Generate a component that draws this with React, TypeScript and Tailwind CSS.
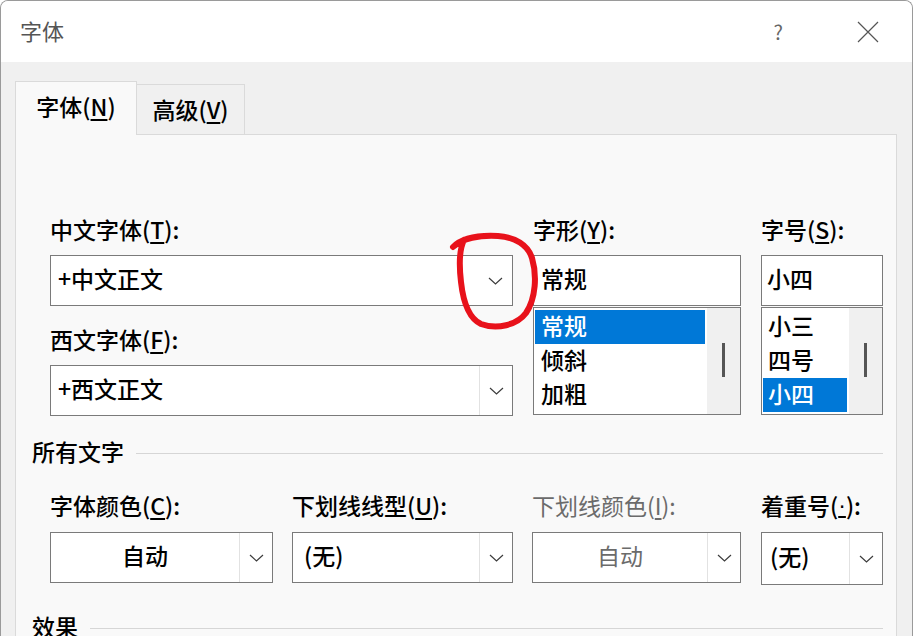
import React from "react"

const FONT = "font-['Noto_Sans_CJK_SC','Noto_Sans',sans-serif]"

function Chevron() {
  return (
    <svg width="15" height="8" viewBox="0 0 15 8">
      <polyline points="1,1 7.5,7 14,1" fill="none" stroke="#3c3c3c" strokeWidth="1.2" />
    </svg>
  )
}

function Combo({
  value,
  className = "",
  center = false,
  split = true,
  muted = false,
  pad = "pl-[7px]",
}: {
  value: React.ReactNode
  className?: string
  center?: boolean
  split?: boolean
  muted?: boolean
  pad?: string
}) {
  return (
    <div className={`flex h-[51px] border border-[#7a7a7a] bg-white ${className}`}>
      <div
        className={`flex flex-1 items-center pb-[4px] text-[23px] ${center ? "justify-center" : pad} ${
          muted ? "text-[#6b6b6b]" : "font-medium text-black"
        }`}
      >
        {value}
      </div>
      <div className={`flex w-[33px] items-center justify-center ${split ? "border-l border-[#e2e2e2]" : ""}`}>
        <Chevron />
      </div>
    </div>
  )
}

function ListBox({ items, selected, pad }: { items: string[]; selected: number; pad: string }) {
  return (
    <div className="mt-px flex h-[108px] border border-[#7a7a7a] bg-white">
      <div className="ml-px mr-[2px] flex flex-1 flex-col pt-[2px]">
        {items.map((it, i) => (
          <div
            key={it}
            className={`flex h-[34px] items-center pb-[3px] text-[23px] font-medium ${pad} ${
              i === selected ? "bg-[#0078d7] text-white" : "text-black"
            }`}
          >
            {it}
          </div>
        ))}
      </div>
      <div className="flex w-[33px] justify-center bg-[#f0f0f0] pt-[35px]">
        <div className="h-[34px] w-[3px] bg-[#555555]" />
      </div>
    </div>
  )
}

function Label({ children, muted = false }: { children: React.ReactNode; muted?: boolean }) {
  return (
    <div
      className={`flex h-[36px] items-center pb-[5px] text-[23px] ${
        muted ? "text-[#6b6b6b]" : "font-medium text-black"
      }`}
    >
      {children}
    </div>
  )
}

function Key({ k }: { k: string }) {
  return <span className="underline underline-offset-[3px]">{k}</span>
}

function Section({ title }: { title: string }) {
  return (
    <div className="flex h-[36px] items-center gap-[12px]">
      <span className="pb-[4px] text-[23px] font-medium text-black">{title}</span>
      <div className="h-px flex-1 bg-[#d6d6d6]" />
    </div>
  )
}

export default function App() {
  return (
    <div className={`relative h-[636px] w-[916px] overflow-hidden bg-white ${FONT}`}>
      <div className="h-[700px] w-[913px] overflow-hidden rounded-t-[8px] border border-b-0 border-[#9a9a9a] bg-[#f0f0f0]">
        {/* title bar */}
        <div className="flex h-[61px] items-center bg-white">
          <span className="ml-[19px] pb-[2px] text-[22px] text-[#555555]">字体</span>
          <span className="ml-auto mr-[74px] text-[20px] text-[#666666]">?</span>
          <svg className="mr-[33px]" width="22" height="22" viewBox="0 0 22 22">
            <path d="M1 1 L21 21 M21 1 L1 21" stroke="#555555" strokeWidth="1.2" />
          </svg>
        </div>

        {/* tabs */}
        <div className="flex items-end pl-[14px] pt-[19px]">
          <div className="relative z-10 -mb-px flex h-[54px] w-[122px] items-center justify-center border border-b-0 border-[#dadada] bg-[#f9f9f9] pb-[4px] text-[23px] font-medium text-black">
            字体(<Key k="N" />)
          </div>
          <div className="flex h-[50px] w-[108px] items-center justify-center border border-b-0 border-l-0 border-[#dadada] bg-[#f0f0f0] text-[23px] font-medium text-black">
            高级(<Key k="V" />)
          </div>
        </div>

        {/* panel */}
        <div className="ml-[14px] h-[520px] w-[882px] border border-[#dadada] bg-[#f9f9f9] pl-[16px] pr-[13px] pt-[79px]">
          <div className="flex gap-[20px] pl-[18px]">
            <div className="flex w-[463px] flex-col">
              <Label>
                中文字体(<Key k="T" />):
              </Label>
              <Combo className="mt-[5px]" value="+中文正文" split={false} />
              <div className="mt-[18px]">
                <Label>
                  西文字体(<Key k="F" />):
                </Label>
              </div>
              <Combo className="mt-[5px]" value="+西文正文" />
            </div>
            <div className="flex w-[208px] flex-col">
              <Label>
                字形(<Key k="Y" />):
              </Label>
              <div className="mt-[5px] flex h-[51px] items-center border border-[#7a7a7a] bg-white pb-[4px] pl-[7px] text-[23px] font-medium text-black">
                常规
              </div>
              <ListBox items={["常规", "倾斜", "加粗"]} selected={0} pad="pl-[6px]" />
            </div>
            <div className="flex w-[122px] flex-col">
              <Label>
                字号(<Key k="S" />):
              </Label>
              <div className="mt-[5px] flex h-[51px] items-center border border-[#7a7a7a] bg-white pb-[4px] pl-[5px] text-[23px] font-medium text-black">
                小四
              </div>
              <ListBox items={["小三", "四号", "小四"]} selected={2} pad="pl-[5px]" />
            </div>
          </div>

          <div className="mt-[19px]">
            <Section title="所有文字" />
          </div>

          <div className="mt-[19px] flex gap-[19px] pl-[18px]">
            <div className="flex w-[223px] flex-col">
              <Label>
                字体颜色(<Key k="C" />):
              </Label>
              <Combo className="mt-[6px]" value="自动" center />
            </div>
            <div className="flex w-[221px] flex-col">
              <Label>
                下划线线型(<Key k="U" />):
              </Label>
              <Combo className="mt-[6px]" value="(无)" pad="pl-[11px]" />
            </div>
            <div className="flex w-[209px] flex-col">
              <Label muted>
                下划线颜色(<Key k="I" />):
              </Label>
              <Combo className="mt-[6px]" value="自动" center muted />
            </div>
            <div className="ml-px flex w-[122px] flex-col">
              <Label>
                着重号(<span className="font-['Liberation_Sans',sans-serif] underline underline-offset-[3px]">·</span>):
              </Label>
              <Combo className="mt-[6px] h-[53px]" value="(无)" pad="pl-[8px]" />
            </div>
          </div>

          <div className="mt-[25px]">
            <Section title="效果" />
          </div>
        </div>
      </div>

      {/* hand-drawn red mark */}
      <svg className="pointer-events-none absolute inset-0" width="916" height="636" viewBox="0 0 916 636">
        <path
          d="M453 247 C 462 238, 480 235, 498 236 C 515 237, 528 245, 532 258 C 537 275, 536 298, 526 313 C 517 325, 497 330, 481 324 C 468 318, 463 300, 461 282 C 459 265, 459 250, 464 240"
          fill="none"
          stroke="#e8121b"
          strokeWidth="6"
          strokeLinecap="round"
          strokeLinejoin="round"
        />
      </svg>
    </div>
  )
}
